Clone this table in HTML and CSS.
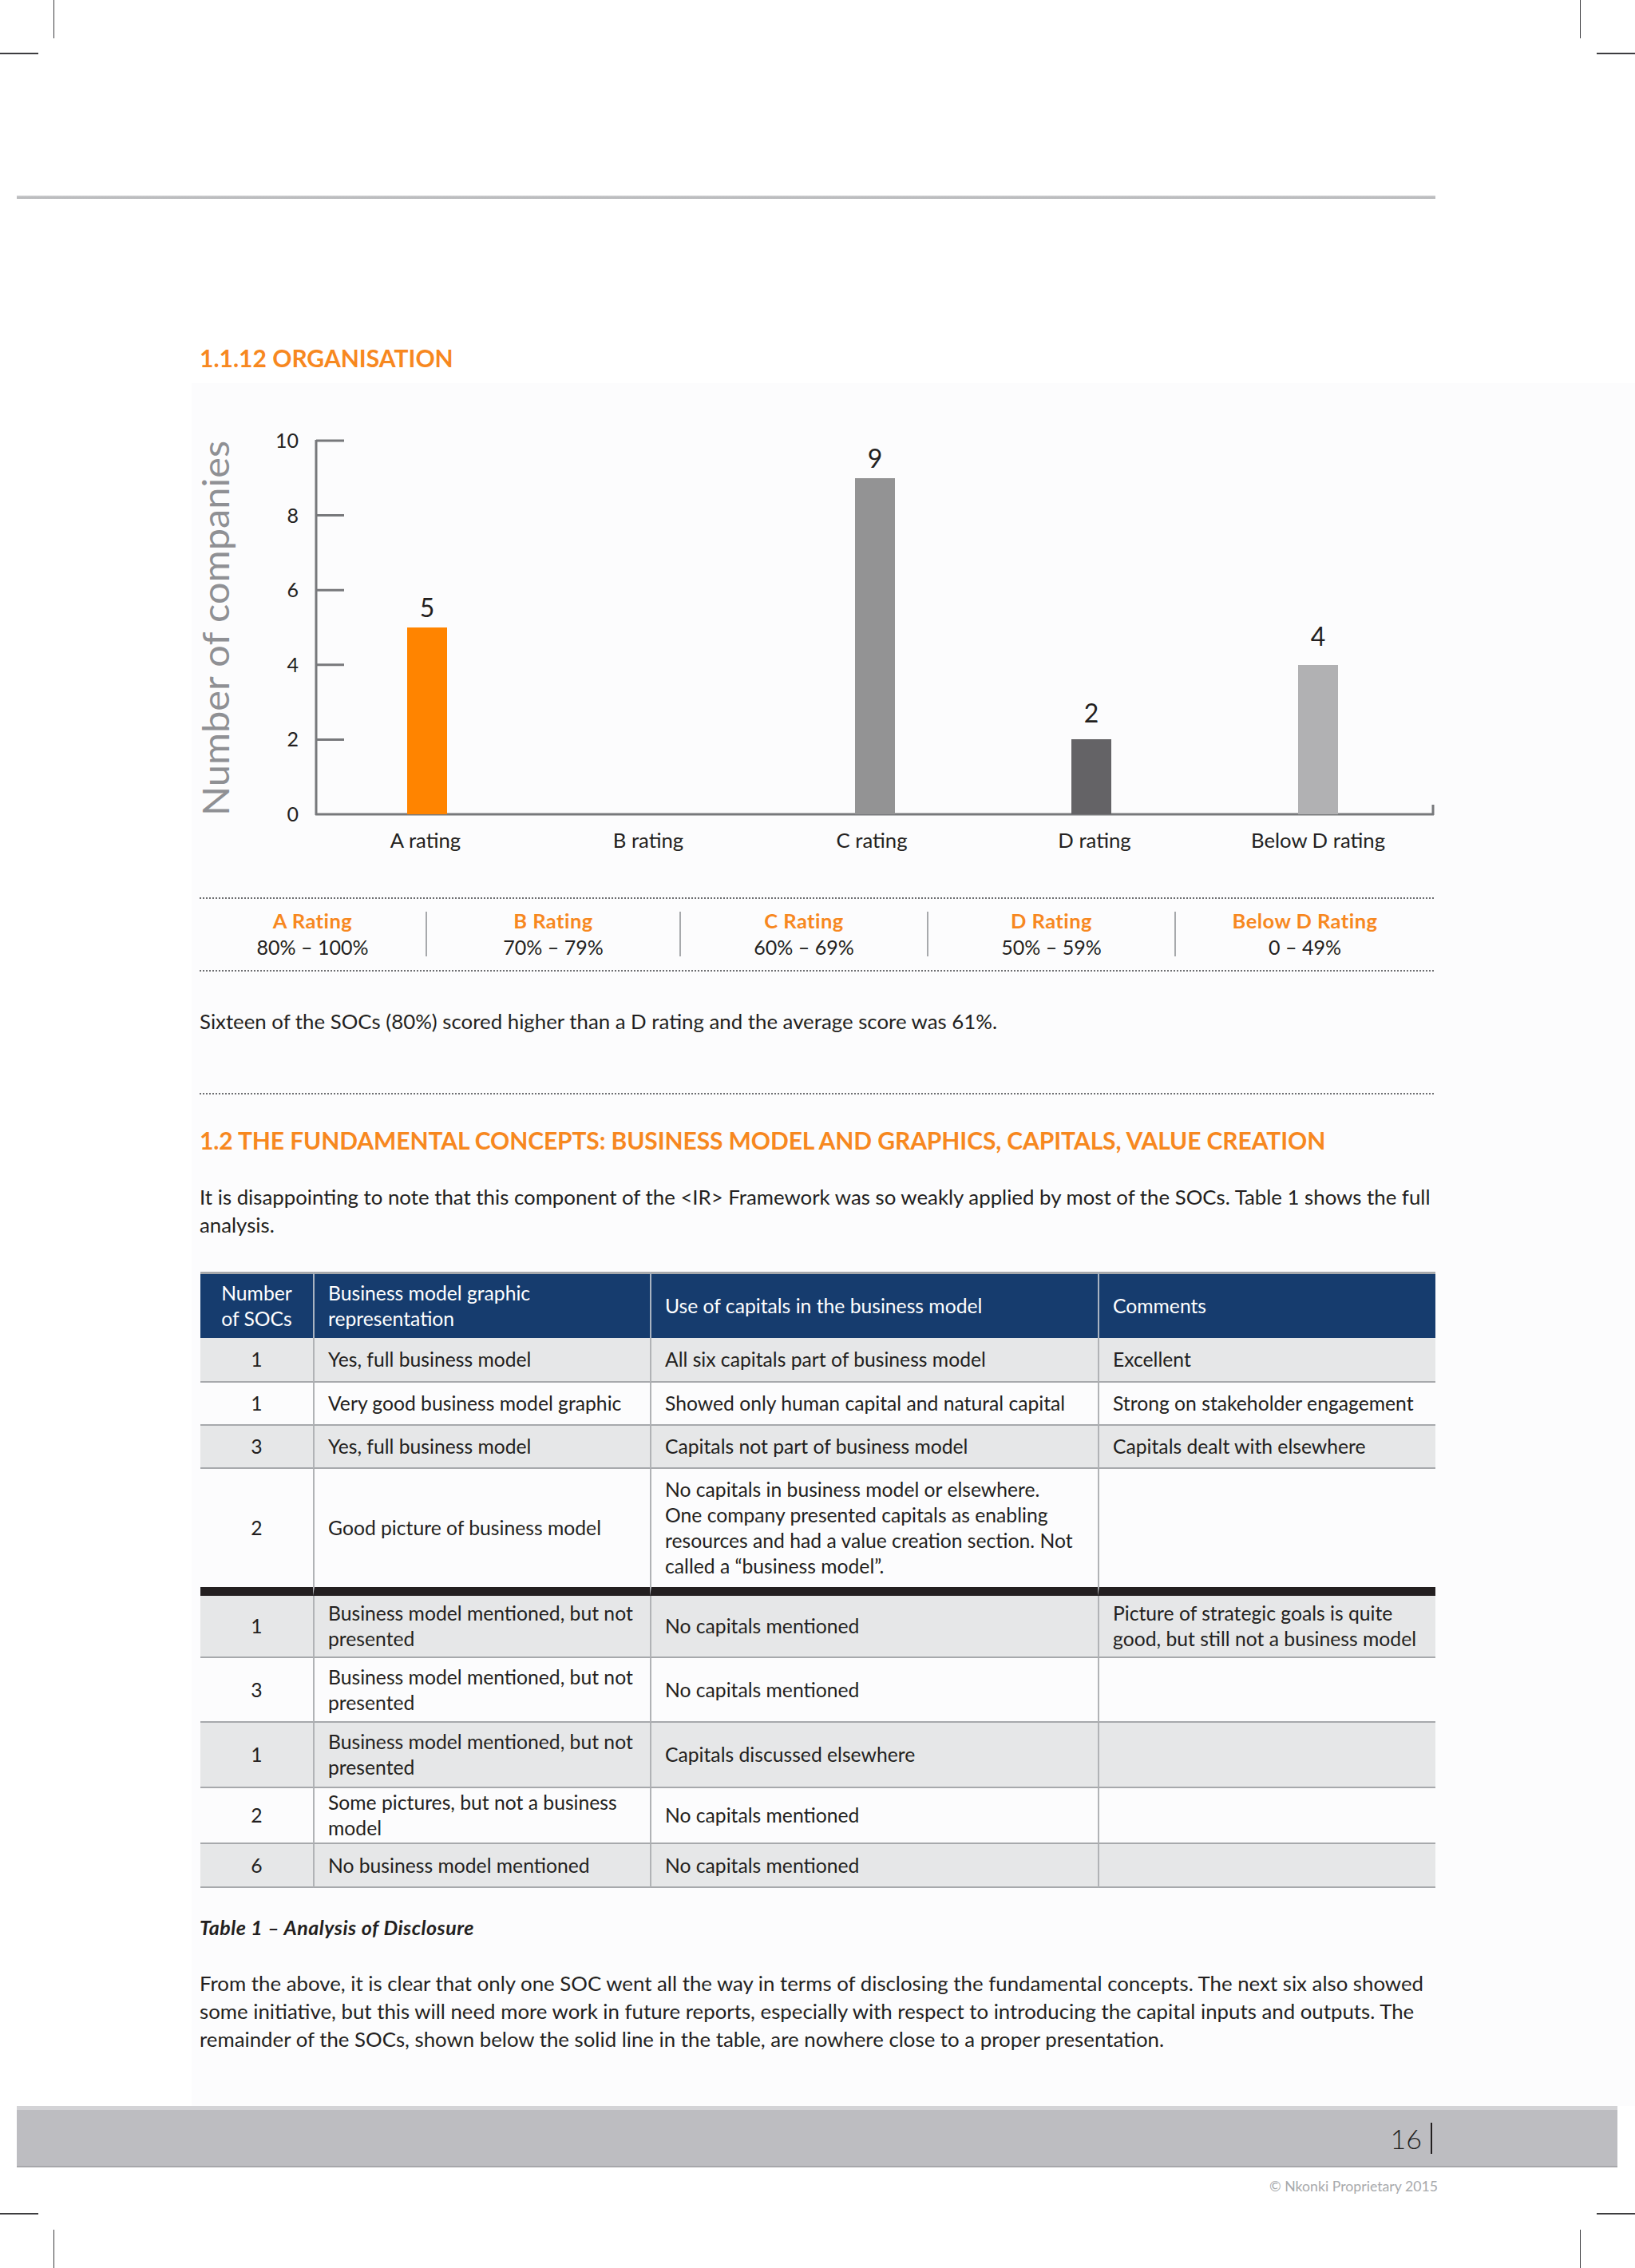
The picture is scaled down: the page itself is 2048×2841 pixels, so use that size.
FILE: index.html
```html
<!DOCTYPE html>
<html lang="en">
<head>
<meta charset="utf-8">
<title>Organisation – Page 16</title>
<link rel="stylesheet" href="styles.css">
</head>
<body>
<div class="page">
  <span class="crop crop-v tl-v"></span>
  <span class="crop crop-h tl-h"></span>
  <span class="crop crop-v tr-v"></span>
  <span class="crop crop-h tr-h"></span>
  <span class="crop crop-h bl-h"></span>
  <span class="crop crop-v bl-v"></span>
  <span class="crop crop-h br-h"></span>
  <span class="crop crop-v br-v"></span>

  <div class="top-rule"></div>

  <h2 class="section-title first">1.1.12 ORGANISATION</h2>

  <div class="sheet">
    <svg class="chart" width="1560" height="600" viewBox="0 0 1560 600">
      <text class="axis-title" transform="translate(37 287) rotate(-90)" text-anchor="middle" textLength="470" lengthAdjust="spacingAndGlyphs">Number of companies</text>
      <g class="axis">
        <line x1="146" y1="51" x2="146" y2="521"/>
        <line x1="145" y1="520" x2="1546" y2="520"/>
        <line x1="1545" y1="508" x2="1545" y2="521"/>
        <line x1="146" y1="52" x2="181" y2="52"/>
        <line x1="146" y1="145.6" x2="181" y2="145.6"/>
        <line x1="146" y1="239.2" x2="181" y2="239.2"/>
        <line x1="146" y1="332.8" x2="181" y2="332.8"/>
        <line x1="146" y1="426.4" x2="181" y2="426.4"/>
      </g>
      <g class="tick-labels">
        <text x="124" y="61">10</text>
        <text x="124" y="154.6">8</text>
        <text x="124" y="248.2">6</text>
        <text x="124" y="341.8">4</text>
        <text x="124" y="435.4">2</text>
        <text x="124" y="529">0</text>
      </g>
      <rect class="bar bar-a" x="260" y="286" width="50" height="234"/>
      <rect class="bar bar-c" x="821" y="99" width="50" height="421"/>
      <rect class="bar bar-d" x="1092" y="426" width="50" height="94"/>
      <rect class="bar bar-e" x="1376" y="333" width="50" height="187"/>
      <g class="value-labels">
        <text x="285" y="273">5</text>
        <text x="846" y="86">9</text>
        <text x="1117" y="405">2</text>
        <text x="1401" y="309">4</text>
      </g>
      <g class="cat-labels">
        <text x="283" y="562">A rating</text>
        <text x="562" y="562">B rating</text>
        <text x="842" y="562">C rating</text>
        <text x="1121" y="562">D rating</text>
        <text x="1401" y="562">Below D rating</text>
      </g>
    </svg>

    <div class="legend">
      <div class="legend-cell"><span class="legend-name">A Rating</span><span>80% – 100%</span></div>
      <div class="legend-cell"><span class="legend-name">B Rating</span><span>70% – 79%</span></div>
      <div class="legend-cell"><span class="legend-name">C Rating</span><span>60% – 69%</span></div>
      <div class="legend-cell"><span class="legend-name">D Rating</span><span>50% – 59%</span></div>
      <div class="legend-cell"><span class="legend-name">Below D Rating</span><span>0 – 49%</span></div>
    </div>

    <p class="body-text summary">Sixteen of the SOCs (80%) scored higher than a D rating and the average score was 61%.</p>

    <div class="dotted-rule"></div>

    <h2 class="section-title second">1.2 THE FUNDAMENTAL CONCEPTS: BUSINESS MODEL AND GRAPHICS, CAPITALS, VALUE CREATION</h2>

    <p class="body-text intro">It is disappointing to note that this component of the &lt;IR&gt; Framework was so weakly applied by most of the SOCs. Table 1 shows the full<br>analysis.</p>

    <table class="analysis">
      <colgroup>
        <col class="c1"><col class="c2"><col class="c3"><col class="c4">
      </colgroup>
      <thead>
        <tr>
          <th class="num">Number<br>of SOCs</th>
          <th>Business model graphic<br>representation</th>
          <th>Use of capitals in the business model</th>
          <th>Comments</th>
        </tr>
      </thead>
      <tbody>
        <tr class="shade">
          <td class="num">1</td>
          <td>Yes, full business model</td>
          <td>All six capitals part of business model</td>
          <td>Excellent</td>
        </tr>
        <tr>
          <td class="num">1</td>
          <td>Very good business model graphic</td>
          <td>Showed only human capital and natural capital</td>
          <td>Strong on stakeholder engagement</td>
        </tr>
        <tr class="shade">
          <td class="num">3</td>
          <td>Yes, full business model</td>
          <td>Capitals not part of business model</td>
          <td>Capitals dealt with elsewhere</td>
        </tr>
        <tr class="divider-row">
          <td class="num">2</td>
          <td>Good picture of business model</td>
          <td>No capitals in business model or elsewhere.<br>One company presented capitals as enabling<br>resources and had a value creation section. Not<br>called a “business model”.</td>
          <td></td>
        </tr>
        <tr class="shade">
          <td class="num">1</td>
          <td>Business model mentioned, but not<br>presented</td>
          <td>No capitals mentioned</td>
          <td>Picture of strategic goals is quite<br>good, but still not a business model</td>
        </tr>
        <tr>
          <td class="num">3</td>
          <td>Business model mentioned, but not<br>presented</td>
          <td>No capitals mentioned</td>
          <td></td>
        </tr>
        <tr class="shade">
          <td class="num">1</td>
          <td>Business model mentioned, but not<br>presented</td>
          <td>Capitals discussed elsewhere</td>
          <td></td>
        </tr>
        <tr>
          <td class="num">2</td>
          <td>Some pictures, but not a business<br>model</td>
          <td>No capitals mentioned</td>
          <td></td>
        </tr>
        <tr class="shade">
          <td class="num">6</td>
          <td>No business model mentioned</td>
          <td>No capitals mentioned</td>
          <td></td>
        </tr>
      </tbody>
    </table>

    <p class="caption">Table 1 – Analysis of Disclosure</p>

    <p class="body-text closing">From the above, it is clear that only one SOC went all the way in terms of disclosing the fundamental concepts. The next six also showed<br>some initiative, but this will need more work in future reports, especially with respect to introducing the capital inputs and outputs. The<br>remainder of the SOCs, shown below the solid line in the table, are nowhere close to a proper presentation.</p>
  </div>

  <footer class="footer-bar">
    <span class="page-num">16</span>
  </footer>
  <div class="copyright">© Nkonki Proprietary 2015</div>
</div>
</body>
</html>
```
FILE: styles.css
```css
* {
  box-sizing: border-box;
}

html,
body {
  margin: 0;
  padding: 0;
  background: #ffffff;
}

body {
  font-family: Lato, "Liberation Sans", sans-serif;
  color: #231f20;
}

.page {
  position: relative;
  width: 2048px;
  min-height: 2841px;
  display: flex;
  flex-direction: column;
  padding-bottom: 90px;
  overflow: hidden;
}

/* printer crop marks */
.crop {
  position: absolute;
  background: #3d3d40;
}
.crop-v { width: 1px; height: 48px; }
.crop-h { width: 48px; height: 2px; }
.tl-v { left: 67px; top: 0; }
.tl-h { left: 0; top: 66px; }
.tr-v { left: 1979px; top: 0; }
.tr-h { left: 2000px; top: 66px; }
.bl-h { left: 0; top: 2772px; }
.bl-v { left: 67px; top: 2793px; }
.br-h { left: 2000px; top: 2772px; }
.br-v { left: 1979px; top: 2793px; }

.top-rule {
  flex: none;
  margin: 245px 0 0 21px;
  width: 1777px;
  height: 4px;
  background: linear-gradient(#cdced0, #b0b1b3);
}

.section-title {
  margin: 0;
  font-size: 30px;
  line-height: 36px;
  font-weight: 700;
  color: #f7881f;
  white-space: nowrap;
}

.section-title.first {
  margin: 181px 0 14px 250px;
}

.section-title.second {
  margin-top: 39px;
  letter-spacing: -0.1px;
}

.sheet {
  flex: 1;
  margin-left: 240px;
  padding-left: 10px;
  background: #fcfcfd;
}

.chart {
  display: block;
  margin-top: 20px;
  overflow: visible;
  font-family: Lato, "Liberation Sans", sans-serif;
}

.axis-title {
  font-size: 46px;
  fill: #8f9094;
}

.axis line {
  stroke: #77787b;
  stroke-width: 3;
}

.tick-labels text {
  font-size: 25px;
  fill: #231f20;
  text-anchor: end;
}

.value-labels text {
  font-size: 32px;
  fill: #231f20;
  text-anchor: middle;
}

.cat-labels text {
  font-size: 25.7px;
  fill: #231f20;
  text-anchor: middle;
}

.bar-a { fill: #ff8400; }
.bar-c { fill: #939394; }
.bar-d { fill: #646366; }
.bar-e { fill: #b1b1b3; }

.legend {
  display: grid;
  grid-template-columns: 283px 318px 310px 310px 325px;
  width: 1546px;
  margin-top: 24px;
  padding: 16px 0 17px;
  border-top: 2px dotted #6d6e71;
  border-bottom: 2px dotted #6d6e71;
}

.legend-cell {
  height: 56px;
  display: flex;
  flex-direction: column;
  justify-content: center;
  align-items: center;
  font-size: 25px;
  line-height: 33px;
  white-space: nowrap;
}

.legend-cell + .legend-cell {
  border-left: 2px solid #a7a9ac;
}

.legend-name {
  font-size: 25.5px;
  letter-spacing: 0.45px;
  font-weight: 700;
  color: #f7881f;
}

.body-text {
  margin: 0;
  width: 1600px;
  font-size: 25.8px;
  line-height: 35px;
  white-space: nowrap;
}

.summary {
  margin-top: 45px;
}

.dotted-rule {
  width: 1546px;
  margin-top: 72px;
  border-top: 2px dotted #6d6e71;
}

.intro {
  margin-top: 36px;
}

.analysis {
  margin: 41px 0 0 1px;
  width: 1547px;
  table-layout: fixed;
  border-collapse: separate;
  border-spacing: 0;
  font-size: 24.7px;
  line-height: 32px;
}

.analysis .c1 { width: 141px; }
.analysis .c2 { width: 422px; }
.analysis .c3 { width: 561px; }
.analysis .c4 { width: 423px; }

.analysis th,
.analysis td {
  padding: 0 6px 0 17px;
  text-align: left;
  vertical-align: middle;
  white-space: nowrap;
}

.analysis th {
  height: 83px;
  background: #163c6e;
  color: #ffffff;
  font-weight: 400;
  border-top: 3px solid #a7a9ac;
}

.analysis th + th {
  border-left: 2px solid #a9b3c1;
}

.analysis td {
  border-bottom: 2px solid #a7a9ac;
}

.analysis td + td {
  border-left: 2px solid #b1b3b6;
}

.analysis .num {
  padding: 0;
  text-align: center;
}

.analysis tr.shade td {
  background: #e6e7e8;
}

.analysis tbody tr:nth-child(1) td { height: 56px; }
.analysis tbody tr:nth-child(2) td { height: 54px; }
.analysis tbody tr:nth-child(3) td { height: 54px; }
.analysis tbody tr:nth-child(4) td { height: 159px; }
.analysis tbody tr:nth-child(5) td { height: 78px; }
.analysis tbody tr:nth-child(6) td { height: 81px; }
.analysis tbody tr:nth-child(7) td { height: 82px; }
.analysis tbody tr:nth-child(8) td { height: 70px; }
.analysis tbody tr:nth-child(9) td { height: 55px; }

.analysis tr.divider-row td {
  border-bottom: 11px solid #231f20;
}

.caption {
  margin: 32px 0 0;
  font-size: 25px;
  line-height: 35px;
  font-style: italic;
  font-weight: 700;
  letter-spacing: 0.5px;
}

.closing {
  margin-top: 35px;
}

.footer-bar {
  flex: none;
  margin-left: 21px;
  width: 2005px;
  height: 77px;
  display: flex;
  justify-content: flex-end;
  align-items: center;
  padding-right: 232px;
  background: #bdbdc1;
  border-top: 5px solid #d3d3d6;
  border-bottom: 2px solid #a7a7ab;
}

.page-num {
  font-size: 34px;
  font-weight: 300;
  line-height: 39px;
  padding-right: 11px;
  border-right: 2px solid #231f20;
  color: #231f20;
}

.copyright {
  flex: none;
  margin-top: 12px;
  height: 24px;
  padding-right: 247px;
  text-align: right;
  font-size: 17.7px;
  line-height: 24px;
  color: #a7a9ac;
}
```
